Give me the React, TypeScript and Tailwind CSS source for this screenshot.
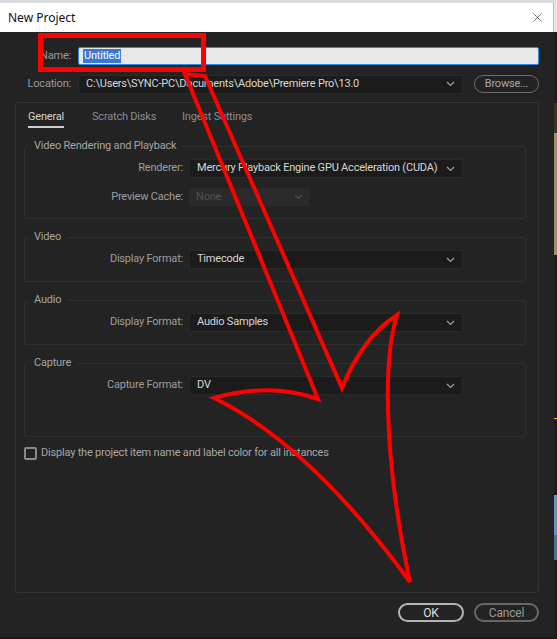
import { X } from "lucide-react";

const Chevron = ({ dim = false }: { dim?: boolean }) => (
  <svg width="9" height="6" viewBox="0 0 9 6" className={dim ? "text-[#4e4e4e]" : "text-[#a0a0a0]"}>
    <path d="M1 1 L4.5 4.5 L8 1" fill="none" stroke="currentColor" strokeWidth="1.2" />
  </svg>
);

const Select = ({ value, className }: { value: string; className: string }) => (
  <div className={`h-[19px] flex items-center justify-between pl-[7px] pr-[7px] rounded-[2px] bg-[#1b1b1b] border border-[#2a2a2a] text-[#d6d6d6] whitespace-nowrap ${className}`}>
    <span>{value}</span>
    <Chevron />
  </div>
);

const Row = ({ label, children }: { label: string; children: React.ReactNode }) => (
  <div className="flex items-center">
    <div className="w-[158px] text-right text-[#9e9e9e] whitespace-nowrap">{label}</div>
    <div className="ml-[6px]">{children}</div>
  </div>
);

const Group = ({ title, children, pb = "pb-[12px]" }: { title: string; children: React.ReactNode; pb?: string }) => (
  <fieldset className={`w-[502px] ml-[8px] mt-[10px] pt-[5px] border border-[#2f2f2f] rounded-[3px] ${pb}`}>
    <legend className="ml-[3px] px-[6px] leading-[16px] text-[#a4a4a4]">{title}</legend>
    {children}
  </fieldset>
);

export default function App() {
  return (
    <div className="relative w-[557px] h-[639px] flex overflow-hidden text-[11px] tracking-[-0.2px] font-['Roboto',sans-serif]">
      <div className="w-[554px] h-full flex flex-col">
        <div className="h-[3px] bg-[#dcdcdc]" />
        <div className="h-[29px] bg-white flex items-center justify-between pl-[8px] pr-[8px] border-r border-[#bdbdbd]">
          <span className="text-[12px] tracking-normal text-[#111] font-['Noto_Sans',sans-serif]">New Project</span>
          <X size={15} strokeWidth={1} className="text-[#222]" />
        </div>
        <div className="flex-1 bg-[#232323] flex flex-col pt-[15px]">
          <div className="flex items-center h-[18px]">
            <div className="w-[71px] text-right text-[#9a9a9a]">Name:</div>
            <div className="ml-[7px] w-[461px] h-[18px] bg-[#e8e8e8] border border-[#2d8ae8] rounded-[2px] flex items-center pl-[4px]">
              <span className="bg-[#3a77d6] text-white px-[1px] leading-[14px]">Untitled</span>
            </div>
          </div>
          <div className="flex items-center h-[18px] mt-[10px]">
            <div className="w-[71px] text-right text-[#9a9a9a]">Location:</div>
            <Select value="C:\Users\SYNC-PC\Documents\Adobe\Premiere Pro\13.0" className="ml-[7px] w-[385px] h-[18px]" />
            <div className="ml-[11px] w-[65px] h-[18px] rounded-full border-[1.5px] border-[#6c6c6c] text-[#a8a8a8] flex items-center justify-center">Browse...</div>
          </div>

          <div className="ml-[15px] mt-[9px] w-[524px] h-[491px] border border-[#333333] rounded-[3px]">
            <div className="flex pl-[12px] pt-[6px]">
              <div className="w-[64px]">
                <span className="inline-block leading-[16px] pb-[1px] border-b-2 border-[#cfcfcf] text-[#d4d4d4]">General</span>
              </div>
              <div className="w-[90px] leading-[16px] text-[#8c8c8c]">Scratch Disks</div>
              <div className="leading-[16px] text-[#8c8c8c]">Ingest Settings</div>
            </div>

            <Group title="Video Rendering and Playback">
              <Row label="Renderer:">
                <Select value="Mercury Playback Engine GPU Acceleration (CUDA)" className="w-[274px]" />
              </Row>
              <div className="mt-[10px]">
                <Row label="Preview Cache:">
                  <div className="w-[121px] h-[18px] rounded-[2px] bg-[#2a2a2a] flex items-center justify-between pl-[7px] pr-[7px] text-[#505050]">
                    <span>None</span>
                    <Chevron dim />
                  </div>
                </Row>
              </div>
            </Group>

            <Group title="Video">
              <Row label="Display Format:">
                <Select value="Timecode" className="w-[274px]" />
              </Row>
            </Group>

            <Group title="Audio">
              <Row label="Display Format:">
                <Select value="Audio Samples" className="w-[274px]" />
              </Row>
            </Group>

            <Group title="Capture" pb="pb-[41px]">
              <Row label="Capture Format:">
                <Select value="DV" className="w-[274px]" />
              </Row>
            </Group>

            <div className="flex items-center ml-[8px] mt-[8px]">
              <div className="w-[13px] h-[13px] border-2 border-[#8a8a8a] rounded-[2px]" />
              <span className="ml-[4px] text-[#a6a6a6] whitespace-nowrap">Display the project item name and label color for all instances</span>
            </div>
          </div>

          <div className="flex justify-end gap-[10px] pr-[15px] mt-[10px]">
            <div className="w-[66px] h-[19px] rounded-full border-2 border-[#b4b4b4] text-[#dedede] text-[12px] flex items-center justify-center">OK</div>
            <div className="w-[65px] h-[19px] rounded-full border-2 border-[#666666] text-[#9a9a9a] text-[12px] flex items-center justify-center">Cancel</div>
          </div>
          <div className="flex-1" />
          <div className="h-[2px] bg-[#191919]" />
        </div>
      </div>

      <div className="w-[3px] h-full flex flex-col bg-[#1c1c1c]">
        <div className="h-[32px] bg-[#e6e6e6]" />
        <div className="h-[71px]" />
        <div className="h-[30px] bg-[#3b3327]" />
        <div className="h-[122px] bg-[#a08d63]" />
        <div className="h-[163px]" />
        <div className="h-[1px] bg-[#e0d21e]" />
        <div className="h-[76px]" />
        <div className="h-[40px] bg-[#6a8fc4]" />
        <div className="h-[25px] bg-[#4f6d98]" />
      </div>

      <svg className="absolute inset-0 pointer-events-none" width="557" height="639" viewBox="0 0 557 639">
        <rect x="40.5" y="35.5" width="163" height="34" fill="none" stroke="#ff0000" strokeWidth="5" />
        <path
          d="M185,74 L318,399 Q270,382 214,398 Q310,445 410,582 C388,480 380,370 397,315 Q362,338 342,388 L205,76 Z"
          fill="none"
          stroke="#ff0000"
          strokeWidth="4"
          strokeLinejoin="miter"
        />
      </svg>
    </div>
  );
}
